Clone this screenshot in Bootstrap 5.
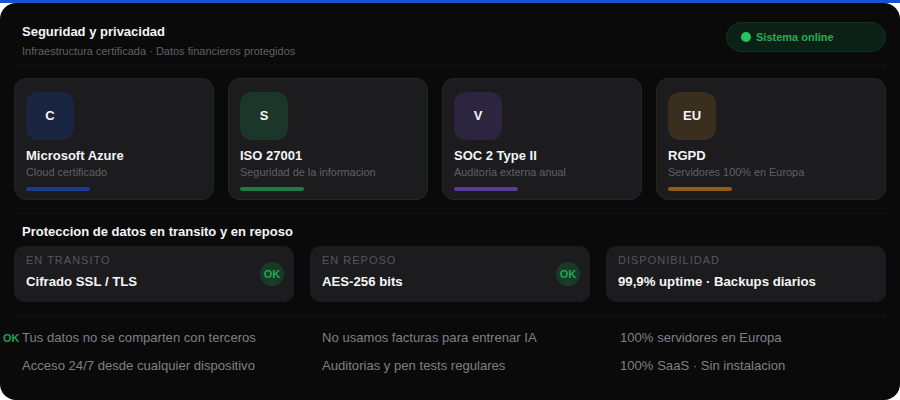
<!DOCTYPE html>
<html lang="es">
<head>
    <meta charset="UTF-8">
    <title>Seguridad y privacidad</title>
    <link href="https://cdn.jsdelivr.net/npm/bootstrap@5.3.0/dist/css/bootstrap.min.css" rel="stylesheet">
    <style>
        html, body { height: 400px; overflow: hidden; }
        body {
            background: #fff;
            font-family: "Liberation Sans", Arial, sans-serif;
        }
        .top-line { height: 3px; background: #1d4ed8; position: relative; z-index: 2; }
        .panel {
            height: 397px;
            background: #0a0a0b;
            border-radius: 16px;
            padding: 0 14px;
        }
        .head-box { height: 63px; padding: 0 0 0 8px; border-bottom: 1px solid #131314; }
        .head-title { font-size: 13px; font-weight: 700; color: #f5f5f5; line-height: 16px; padding-top: 1px; }
        .head-sub { font-size: 11px; color: #5f6066; line-height: 14px; margin-top: 4px; }
        .status-pill {
            width: 160px; height: 30px;
            margin-top: 19px;
            background: #0c2115;
            border: 1px solid #10331f;
            border-radius: 15px;
            padding-left: 14px;
            gap: 5px;
            font-size: 11px; font-weight: 700; color: #22ad56;
        }
        .status-dot { width: 10px; height: 10px; border-radius: 50%; background: #22c55e; margin-top: -1px; }
        .cert-row { padding: 12px 0 13px; border-bottom: 1px solid #131314; gap: 14px; }
        .cert-box {
            width: 200px; height: 122px;
            background: #1c1c1f;
            border: 1px solid #1c2338;
            border-radius: 12px;
            padding: 13px 11px 0;
        }
        .cert-box.wide { width: 230px; border-color: #2c2418; }
        .cert-box.green { border-color: #1a2f22; }
        .cert-box.violet { border-color: #25233a; }
        .cert-ico {
            width: 48px; height: 48px;
            border-radius: 12px;
            font-size: 13px; font-weight: 700; color: #f5f5f5;
        }
        .cert-name { font-size: 13px; font-weight: 700; color: #f5f5f5; line-height: 16px; margin-top: 8px; }
        .cert-desc { font-size: 10.9px; color: #5f6066; line-height: 14px; margin-top: 1px; }
        .cert-bar { width: 64px; height: 4px; border-radius: 2px; margin-top: 8px; }
        .sec-title { font-size: 13px; font-weight: 700; color: #f5f5f5; line-height: 16px; padding: 10px 0 6px 8px; }
        .prot-row { gap: 16px; padding-bottom: 14px; border-bottom: 1px solid #131314; }
        .prot-box {
            flex: 1 1 0; height: 56px;
            background: #1c1c1f;
            border-radius: 10px;
            padding: 8px 12px 0;
        }
        .prot-label { font-size: 11px; letter-spacing: 1px; color: #55565b; line-height: 13px; }
        .prot-val { font-size: 13.2px; font-weight: 700; color: #f5f5f5; line-height: 16px; margin-top: 7px; }
        .ok-round {
            position: absolute; right: 10px; top: 16px;
            width: 24px; height: 24px; border-radius: 50%;
            background: #1a3a28; color: #22a552;
            font-size: 11px; font-weight: 700;
        }
        .facts { padding: 12px 0 0 8px; }
        .fact-col { font-size: 13.1px; color: #7f8086; line-height: 18px; }
        .fact-col div { margin-bottom: 10px; position: relative; }
        .fact-a { width: 300px; }
        .fact-b { width: 298px; }
        .ok-side {
            position: absolute; left: -19px; top: 0;
            font-size: 11px; font-weight: 700; color: #16a34a;
        }
    </style>
</head>
<body class="m-0">
    <div class="top-line"></div>
    <div class="panel">
        <div class="head-box d-flex justify-content-between">
            <div class="pt-3 mt-1">
                <div class="head-title">Seguridad y privacidad</div>
                <div class="head-sub">Infraestructura certificada · Datos financieros protegidos</div>
            </div>
            <div class="status-pill d-flex align-items-center">
                <span class="status-dot"></span><span>Sistema online</span>
            </div>
        </div>

        <div class="cert-row d-flex">
            <div class="cert-box">
                <div class="cert-ico d-flex align-items-center justify-content-center" style="background:#1a2542">C</div>
                <div class="cert-name">Microsoft Azure</div>
                <div class="cert-desc">Cloud certificado</div>
                <div class="cert-bar" style="background:#1e3a8a"></div>
            </div>
            <div class="cert-box green">
                <div class="cert-ico d-flex align-items-center justify-content-center" style="background:#1c3629">S</div>
                <div class="cert-name">ISO 27001</div>
                <div class="cert-desc">Seguridad de la informacion</div>
                <div class="cert-bar" style="background:#217a46"></div>
            </div>
            <div class="cert-box violet">
                <div class="cert-ico d-flex align-items-center justify-content-center" style="background:#2b2540">V</div>
                <div class="cert-name">SOC 2 Type II</div>
                <div class="cert-desc">Auditoria externa anual</div>
                <div class="cert-bar" style="background:#5b3c96"></div>
            </div>
            <div class="cert-box wide">
                <div class="cert-ico d-flex align-items-center justify-content-center" style="background:#3a2e1e">EU</div>
                <div class="cert-name">RGPD</div>
                <div class="cert-desc">Servidores 100% en Europa</div>
                <div class="cert-bar" style="background:#8a5f17"></div>
            </div>
        </div>

        <div class="sec-title">Proteccion de datos en transito y en reposo</div>
        <div class="prot-row d-flex">
            <div class="prot-box position-relative">
                <div class="prot-label">EN TRANSITO</div>
                <div class="prot-val">Cifrado SSL / TLS</div>
                <span class="ok-round d-flex align-items-center justify-content-center">OK</span>
            </div>
            <div class="prot-box position-relative">
                <div class="prot-label">EN REPOSO</div>
                <div class="prot-val">AES-256 bits</div>
                <span class="ok-round d-flex align-items-center justify-content-center">OK</span>
            </div>
            <div class="prot-box">
                <div class="prot-label">DISPONIBILIDAD</div>
                <div class="prot-val">99,9% uptime · Backups diarios</div>
            </div>
        </div>

        <div class="facts d-flex">
            <div class="fact-col fact-a">
                <div><span class="ok-side">OK</span>Tus datos no se comparten con terceros</div>
                <div>Acceso 24/7 desde cualquier dispositivo</div>
            </div>
            <div class="fact-col fact-b">
                <div>No usamos facturas para entrenar IA</div>
                <div>Auditorias y pen tests regulares</div>
            </div>
            <div class="fact-col">
                <div>100% servidores en Europa</div>
                <div>100% SaaS · Sin instalacion</div>
            </div>
        </div>
    </div>
    <script src="https://cdn.jsdelivr.net/npm/bootstrap@5.3.0/dist/js/bootstrap.bundle.min.js"></script>
</body>
</html>
